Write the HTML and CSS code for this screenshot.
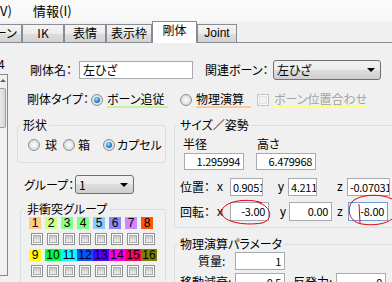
FILE: index.html
```html
<!DOCTYPE html>
<html lang="ja">
<head>
  <meta charset="UTF-8">
  <meta name="viewport" content="width=device-width, initial-scale=1.0">
  <title>剛体</title>
  <link rel="stylesheet" href="styles.css">
</head>
<body>
  <div class="menubar">
    <span class="menu-item first">V)</span>
    <span class="menu-item">情報(I)</span>
  </div>

  <div class="tabs">
    <div class="tab tab-bone">ボーン</div>
    <div class="tab tab-ik">IK</div>
    <div class="tab tab-face">表情</div>
    <div class="tab tab-frame">表示枠</div>
    <div class="tab active">剛体</div>
    <div class="tab tab-joint">Joint</div>
  </div>

  <div class="page">
    <!-- edge of the rigid body list -->
    <div class="side">
      <div class="side-num">4</div>
      <div class="side-list">
        <div class="scroll-up"></div>
        <div class="scroll-thumb"></div>
      </div>
    </div>

    <div class="main">
      <div class="row row-name">
        <span class="lbl lbl-name">剛体名：</span>
        <div class="field field-name">左ひざ</div>
        <span class="lbl lbl-bone">関連ボーン：</span>
        <div class="combo combo-bone"><span>左ひざ</span><i class="arrow"></i></div>
      </div>

      <div class="row row-type">
        <span class="lbl lbl-type">剛体タイプ：</span>
        <span class="radio on"></span>
        <span class="opt mark-green">ボーン追従</span>
        <span class="radio radio-phys"></span>
        <span class="opt mark-orange">物理演算</span>
        <span class="check disabled"></span>
        <span class="opt off mark-yellow">ボーン位置合わせ</span>
      </div>

      <div class="cols">
        <div class="col-left">
          <fieldset class="group group-shape">
            <legend>形状</legend>
            <div class="shape-row">
              <span class="radio"></span><span class="s-lbl s1">球</span>
              <span class="radio r2"></span><span class="s-lbl s2">箱</span>
              <span class="radio on r3"></span><span class="s-lbl s3">カプセル</span>
            </div>
          </fieldset>

          <div class="row row-group">
            <span class="lbl lbl-group">グループ：</span>
            <div class="combo combo-group"><span>1</span><i class="arrow"></i></div>
          </div>

          <fieldset class="group group-nc">
            <legend>非衝突グループ</legend>
            <div class="nc-grid">
              <span class="c c1">1</span>
              <span class="c c2">2</span>
              <span class="c c3">3</span>
              <span class="c c4">4</span>
              <span class="c c5">5</span>
              <span class="c c6">6</span>
              <span class="c c7">7</span>
              <span class="c c8">8</span>
              <span class="check"></span><span class="check"></span><span class="check"></span><span class="check"></span>
              <span class="check"></span><span class="check"></span><span class="check"></span><span class="check"></span>
              <span class="c c9">9</span>
              <span class="c w c10">10</span>
              <span class="c w c11">11</span>
              <span class="c w c12">12</span>
              <span class="c w c13">13</span>
              <span class="c w c14">14</span>
              <span class="c w c15">15</span>
              <span class="c w c16">16</span>
              <span class="check"></span><span class="check"></span><span class="check"></span><span class="check"></span>
              <span class="check"></span><span class="check"></span><span class="check"></span><span class="check"></span>
            </div>
          </fieldset>
        </div>

        <div class="col-right">
          <fieldset class="group group-size">
            <legend>サイズ／姿勢</legend>
            <div class="size-head"><span class="h-radius">半径</span><span>高さ</span></div>
            <div class="size-vals">
              <div class="field num f-radius">1.295994</div>
              <div class="field num f-height">6.479968</div>
            </div>
            <div class="row vec vec-pos">
              <span class="vec-lbl">位置：</span>
              <span class="ax ax-x">x</span>
              <div class="field num cut fp1">0.905159</div>
              <span class="ax ax-y">y</span>
              <div class="field num cut fp2">4.211859</div>
              <span class="ax ax-z">z</span>
              <div class="field num cut fp3">-0.07031</div>
            </div>
            <div class="row vec vec-rot">
              <span class="vec-lbl">回転：</span>
              <span class="ax ax-x">x</span>
              <div class="field num fr1">-3.00</div>
              <span class="ax ax-y2">y</span>
              <div class="field num fr2">0.00</div>
              <span class="ax ax-z2">z</span>
              <div class="field num focus fr3">-8.00</div>
            </div>
          </fieldset>

          <fieldset class="group group-phys">
            <legend>物理演算パラメータ</legend>
            <div class="row prm">
              <span class="prm-lbl p-mass">質量:</span>
              <div class="field num f-prm">1</div>
            </div>
            <div class="row prm prm2">
              <span class="prm-lbl p-move">移動減衰:</span>
              <div class="field num f-prm">0.5</div>
              <span class="prm-lbl p-rep">反発力:</span>
              <div class="field num f-prm">0</div>
            </div>
          </fieldset>
        </div>
      </div>
    </div>
  </div>

  <!-- red pen marks drawn over the screenshot -->
  <svg class="marks" width="392" height="282" viewBox="0 0 392 282">
    <path d="M262 203 C250 198 226 200 222 210 C219 222 244 226 262 223 C273 220 273 207 257 202" />
    <path d="M392 199 C381 193 357 194 351 203 C347 212 350 222 362 224 C373 226 386 224 392 219" />
    <path d="M359 204 L360 223" />
  </svg>
</body>
</html>
```

FILE: styles.css
```css
body {
  margin: 0;
  width: 392px;
  height: 282px;
  overflow: hidden;
  position: relative;
  background-color: #f0f0f0;
  font-family: "Noto Sans CJK JP", sans-serif;
  font-size: 12px;
  line-height: 14px;
  color: #000;
  font-feature-settings: "palt";
}

/* menu + tabs */
.menubar {
  height: 22px;
  background: linear-gradient(#fbfbfb, #f6f6f6);
  display: flex;
  align-items: center;
  font-size: 13px;
}
.menu-item.first {
  width: 33px;
}
.tabs {
  height: 20px;
  display: flex;
  align-items: flex-end;
  margin-left: -22px;
  border-bottom: 1px solid #898c95;
}
.tab {
  box-sizing: border-box;
  height: 18px;
  border: 1px solid #898c95;
  border-bottom: none;
  background: linear-gradient(#f4f4f4, #ebebeb 50%, #dedede 51%, #d2d2d2);
  text-align: center;
  line-height: 16px;
  flex: none;
}
.tab-bone { width: 44px; }
.tab-ik { width: 42px; }
.tab-face { width: 42px; }
.tab-frame { width: 46px; }
.tab-joint { width: 40px; font-family: "Liberation Sans", sans-serif; }
.tab.active {
  width: 45px;
  height: 22px;
  margin-bottom: -1px;
  background: #fff;
  line-height: 15px;
}

/* page */
.page {
  display: flex;
  height: 239px;
}
.side {
  width: 9px;
  flex: none;
  overflow: hidden;
}
.side-num {
  margin-top: 15px;
  margin-left: -2px;
  line-height: 12px;
}
.side-list {
  box-sizing: border-box;
  width: 8px;
  height: 202px;
  margin-top: 4px;
  border: 1px solid #828790;
  border-left: none;
  padding-top: 4px;
}
.scroll-up {
  width: 0;
  height: 0;
  border-left: 3px solid transparent;
  border-right: 3px solid transparent;
  border-bottom: 3px solid #606060;
}
.scroll-thumb {
  box-sizing: border-box;
  width: 6px;
  height: 40px;
  margin-top: 6px;
  border: 1px solid #9a9da2;
  border-left: none;
  border-radius: 0 2px 2px 0;
  background: linear-gradient(90deg, #e8e8e8, #d6d6d6);
}
.main {
  flex: 1;
  min-width: 0;
}
.row {
  display: flex;
  align-items: center;
}
.lbl, .opt, .ax, .vec-lbl, .prm-lbl {
  flex: none;
  white-space: nowrap;
}

/* controls */
.field {
  box-sizing: border-box;
  height: 18px;
  border: 1px solid #a6abb2;
  background: #fff;
  padding: 0 3px;
  line-height: 16px;
  text-align: right;
  white-space: nowrap;
  overflow: hidden;
  flex: none;
}
.field.num {
  font-size: 11px;
  letter-spacing: -0.3px;
}
.field.cut {
  text-align: left;
  padding: 0 2px;
}
.field.focus {
  border-color: #6f9fd3;
}
.combo {
  box-sizing: border-box;
  height: 20px;
  border: 1px solid #707070;
  border-radius: 3px;
  background: linear-gradient(#f2f2f2, #ebebeb 49%, #dddddd 50%, #cfcfcf);
  display: flex;
  align-items: center;
  justify-content: space-between;
  padding: 0 5px 0 3px;
  flex: none;
}
.arrow {
  width: 0;
  height: 0;
  border-left: 4px solid transparent;
  border-right: 4px solid transparent;
  border-top: 4px solid #000;
}
.radio {
  box-sizing: border-box;
  width: 12px;
  height: 12px;
  border-radius: 50%;
  border: 1px solid #8e8f8f;
  background: radial-gradient(circle, #ffffff 0, #e9e9e9 45%, #c6c6c6 100%);
  display: flex;
  align-items: center;
  justify-content: center;
  flex: none;
}
.radio.on::after {
  content: "";
  width: 6px;
  height: 6px;
  border-radius: 50%;
  background: radial-gradient(circle at 40% 35%, #a8e4ff 0, #2f93dd 45%, #0b3f78 100%);
}
.check {
  box-sizing: border-box;
  width: 12px;
  height: 12px;
  border: 1px solid #8e8f8f;
  background: #fdfdfd;
  display: flex;
  align-items: center;
  justify-content: center;
  flex: none;
}
.check::after {
  content: "";
  width: 6px;
  height: 6px;
  border: 1px solid #a9abae;
  background: linear-gradient(#c9c9c9, #ececec);
}
.check.disabled {
  border-color: #c4c4c4;
  background: #f7f7f7;
}
.check.disabled::after {
  border-color: #e2e2e2;
  background: #f1f1f1;
}

/* name row */
.row-name {
  margin-top: 17px;
  height: 20px;
}
.lbl-name {
  margin-left: 21px;
  width: 49px;
}
.field-name {
  width: 114px;
  text-align: left;
}
.lbl-bone {
  margin-left: 12px;
  width: 68px;
}
.combo-bone {
  width: 108px;
}

/* type row */
.row-type {
  margin-top: 12px;
  height: 16px;
  align-items: flex-start;
}
.row-type .radio, .row-type .check {
  margin-top: 2px;
}
.lbl-type {
  margin-left: 18px;
  width: 64px;
}
.opt {
  margin-left: 4px;
  border-bottom: 2px solid transparent;
}
.mark-green {
  width: 61px;
  border-bottom-color: #c9f2a0;
}
.radio-phys {
  margin-left: 12px;
}
.mark-orange {
  width: 55px;
  border-bottom-color: #fcc99b;
}
.row-type .check {
  margin-left: 6px;
}
.mark-yellow {
  margin-left: 5px;
  width: 92px;
  color: #a3a3a3;
  border-bottom-color: #ffff7a;
}

/* columns */
.cols {
  display: flex;
  align-items: flex-start;
  margin-top: 10px;
}
.col-left {
  margin-left: 8px;
  width: 149px;
  flex: none;
}
.col-right {
  margin-left: 8px;
  width: 230px;
  flex: none;
}
.group {
  margin: 0;
  padding: 0;
  border: 1px solid #d5dfe5;
  border-radius: 3px;
  min-width: 0;
}
.group legend {
  padding: 0 2px;
  margin-left: 3px;
  line-height: 14px;
}

/* shape */
.shape-row {
  display: flex;
  align-items: center;
  height: 14px;
  padding: 6px 0 10px 10px;
}
.s1 { margin-left: 5px; }
.r2 { margin-left: 6px; }
.s2 { margin-left: 3px; }
.r3 { margin-left: 13px; }
.s3 { margin-left: 2px; }

.row-group {
  margin-top: 12px;
  height: 19px;
}
.lbl-group {
  margin-left: 7px;
  width: 51px;
}
.combo-group {
  width: 59px;
  height: 19px;
}

/* non collision groups */
.group-nc {
  margin-top: 8px;
  margin-left: 3px;
  width: 146px;
  box-sizing: border-box;
}
.group-nc legend {
  margin-left: 4px;
}
.nc-grid {
  display: grid;
  grid-template-columns: repeat(8, 16px);
  grid-template-rows: 12px 12px 12px 12px;
  row-gap: 4px;
  padding: 1px 0 6px 8px;
}
.nc-grid .check {
  margin-left: 2px;
}
.c {
  width: 12px;
  height: 12px;
  line-height: 12px;
  text-align: center;
  font-family: "Liberation Sans", sans-serif;
  font-size: 12px;
}
.c.w { width: 16px; }
.c1 { background: #ffcc88; }
.c2 { background: #ccff88; }
.c3 { background: #88ff88; }
.c4 { background: #80ff80; }
.c5 { background: #88ccff; }
.c6 { background: #8888ff; }
.c7 { background: #cc88ff; }
.c8 { background: #ff5500; }
.c9 { background: #ffff00; }
.c10 { background: #00ff44; }
.c11 { background: #00ffff; }
.c12 { background: #0055ff; }
.c13 { background: #5500ff; }
.c14 { background: #ff00dd; }
.c15 { background: #ff0055; }
.c16 { background: #808000; }

/* size / pose */
.group-size {
  padding-bottom: 6px;
}
.size-head {
  display: flex;
  margin-top: 5px;
  padding-left: 8px;
}
.h-radius {
  width: 74px;
}
.size-vals {
  display: flex;
  margin-top: 2px;
}
.size-vals .field {
  width: 60px;
  height: 17px;
  line-height: 15px;
}
.f-radius { margin-left: 9px; }
.f-height { margin-left: 12px; }
.vec {
  padding-left: 5px;
  height: 18px;
}
.vec-pos { margin-top: 8px; }
.vec-rot { margin-top: 6px; height: 19px; }
.vec-rot .field { height: 19px; line-height: 17px; }
.vec-lbl { width: 37px; }
.ax {
  font-family: "Liberation Sans", sans-serif;
  width: 10px;
}
.ax-x { width: 13px; }
.ax-y { margin-left: 15px; }
.ax-z { margin-left: 20px; }
.ax-y2 { margin-left: 11px; width: 9px; }
.ax-z2 { margin-left: 5px; width: 11px; }
.fp1 { width: 33px; }
.fp2 { width: 29px; }
.fp3 { width: 43px; }
.fr1 { width: 39px; }
.fr2 { width: 43px; }
.fr3 { width: 40px; }

/* physics */
.group-phys {
  margin-top: 9px;
  padding-bottom: 10px;
}
.prm {
  margin-top: 1px;
  height: 18px;
}
.prm2 { margin-top: 3px; }
.p-mass { margin-left: 23px; width: 37px; }
.p-move { margin-left: 5px; width: 55px; }
.p-rep { margin-left: 8px; width: 43px; }
.f-prm { width: 50px; }

/* pen marks */
.marks {
  position: absolute;
  left: 0;
  top: 0;
  pointer-events: none;
}
.marks path {
  fill: none;
  stroke: #e8000f;
  stroke-width: 1;
}
```
